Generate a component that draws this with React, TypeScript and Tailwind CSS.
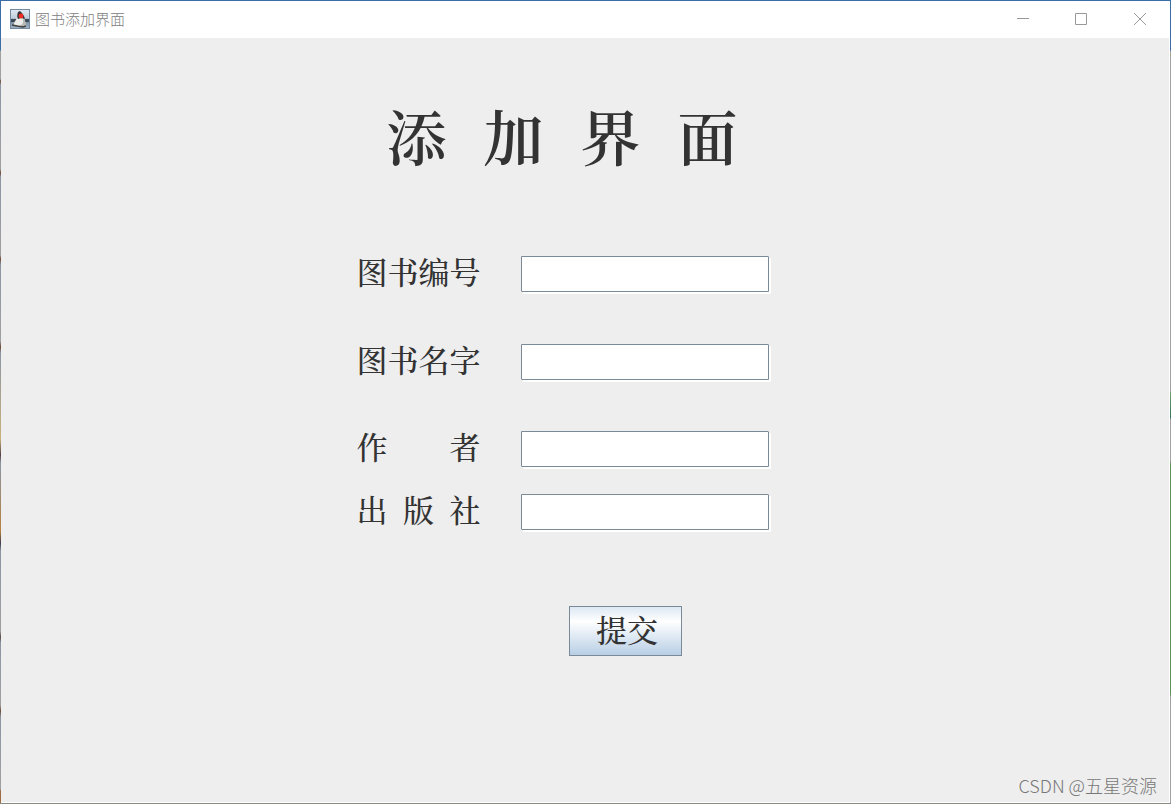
import { useState } from "react";

interface Field {
  id: string;
  label: string;
  spacing: string;
}

const FIELDS: Field[] = [
  { id: "bookId", label: "图书编号", spacing: "mb-[52px]" },
  { id: "bookName", label: "图书名字", spacing: "mb-[51px]" },
  { id: "author", label: "作\u3000\u3000者", spacing: "mb-[27px]" },
  { id: "publisher", label: "出\u2002版\u2002社", spacing: "mb-[76px]" },
];

function DukeIcon() {
  return (
    <svg className="w-5 h-5 shrink-0" viewBox="0 0 20 20" aria-hidden="true">
      <defs>
        <linearGradient id="tile" x1="0" y1="0" x2="0" y2="1">
          <stop offset="0" stopColor="#dfe8f1" />
          <stop offset="0.45" stopColor="#c0cfdd" />
          <stop offset="0.55" stopColor="#71859a" />
          <stop offset="1" stopColor="#a3b6c8" />
        </linearGradient>
      </defs>
      <rect x="0.5" y="0.5" width="19" height="19" fill="url(#tile)" stroke="#7389a0" />
      <path d="M1 10h5v3H1zM15 10h4v3h-4z" fill="#3d4a57" />
      <path d="M7 9L4 14l0 2 3 0 1 2 5 0 2-2-1-7z" fill="#ecece9" />
      <path d="M13 8l3 6 0 3-3 1-3-1 3-3z" fill="#b9bab6" />
      <path d="M2 16l5 1 6 1 3-1" fill="none" stroke="#3f403d" strokeWidth="1.5" />
      <path d="M8 3l2-1c2 2 4 4 5 8l-4-1-3 1c-1-2-1-4 0-7z" fill="#3a3338" />
      <circle cx="11" cy="7" r="2.4" fill="#f02d25" />
    </svg>
  );
}

function TitleBar() {
  return (
    <header className="flex items-center h-[37px] bg-white pl-[9px] pb-px">
      <DukeIcon />
      <span className="ml-[5px] text-[15px] leading-5 font-light text-[#808080]">图书添加界面</span>
      <div className="ml-auto flex h-full text-[#999999]">
        <button type="button" aria-label="最小化" className="w-[58px] grid place-items-center">
          <svg className="w-3 h-3" viewBox="0 0 12 12" stroke="currentColor" fill="none">
            <path d="M0 5.5h12" />
          </svg>
        </button>
        <button type="button" aria-label="最大化" className="w-[58px] grid place-items-center">
          <svg className="w-3 h-3" viewBox="0 0 12 12" stroke="currentColor" fill="none">
            <path d="M0.5 0.5h11v11h-11z" />
          </svg>
        </button>
        <button type="button" aria-label="关闭" className="w-[60px] grid place-items-center">
          <svg className="w-3 h-3" viewBox="0 0 12 12" stroke="currentColor" fill="none">
            <path d="M0 0l12 12M12 0L0 12" />
          </svg>
        </button>
      </div>
    </header>
  );
}

export default function App() {
  const [values, setValues] = useState<Record<string, string>>({});

  return (
    <div className="min-h-screen flex border-t border-t-[#3a6ea5] border-b border-b-[#8a8a84] font-['Noto_Sans_CJK_SC',sans-serif]">
      {/* Window edges */}
      <div className="w-px bg-[linear-gradient(#3a6ea5_49px,#a0a0a0_50px,#a0a0a0_78px,#6b4a35_80px,#8b95a3_84px,#a0a0a0_168px,#6b4a35_172px,#8b95a3_176px,#a0a0a0_254px,#6b4a35_258px,#8b95a3_264px,#a0a0a0_340px,#6b4a35_346px,#8b95a3_352px,#c9b27a_438px,#553f45_454px,#8b95a3_462px,#b5813f_530px,#3f3b4b_542px,#8b95a3_550px,#a0a0a0_630px,#5b4a45_636px,#8b95a3_642px,#a0a0a0_704px,#6b4a35_710px,#8b95a3_716px,#a0a0a0_788px,#9c6b43_790px)]" />

      <div className="flex-1 flex flex-col bg-[#eeeeee]">
        <TitleBar />

        <main className="flex-1 flex flex-col items-center pt-[57px] pr-[46px] border-r border-b border-white text-[#333333] font-['Noto_Serif_CJK_SC','Noto_Sans_CJK_SC',serif]">
          <h1 className="flex gap-[37px] text-[60px] leading-[80px] font-semibold">
            {["添", "加", "界", "面"].map((char) => (
              <span key={char}>{char}</span>
            ))}
          </h1>

          <form className="mt-[81px] flex flex-col" onSubmit={(e) => e.preventDefault()}>
            {FIELDS.map((field) => (
              <div key={field.id} className={`flex items-start gap-[37px] ${field.spacing}`}>
                <label
                  htmlFor={field.id}
                  className="w-32 pl-px text-[31px] leading-[30px] font-medium whitespace-pre"
                >
                  {field.label}
                </label>
                <input
                  id={field.id}
                  type="text"
                  value={values[field.id] ?? ""}
                  onChange={(e) => setValues({ ...values, [field.id]: e.target.value })}
                  className="w-[248px] h-9 px-1 bg-white border border-[#7a8a99] rounded-tr-[1px] rounded-bl-[1px] shadow-[2px_2px_0_#ffffff] text-2xl outline-none"
                />
              </div>
            ))}
            <button
              type="submit"
              className="ml-[213px] w-[113px] h-[50px] pb-1 pl-1 border border-[#7a8a99] bg-linear-to-b from-[#dde8f3] via-white via-30% to-[#b8cfe5] text-[31px] leading-9 font-medium"
            >
              提交
            </button>
          </form>
        </main>

        <footer className="-mt-9 h-9 pr-[13px] text-right text-[18px] leading-9 font-light text-[#777777]">
          CSDN @五星资源
        </footer>
      </div>

      <div className="w-px bg-[linear-gradient(#3a6ea5_49px,#a0a0a0_50px,#a0a0a0_390px,#6f9a6a_392px,#2f7a5a_416px,#a0a0a0_419px,#a0a0a0_460px,#5f8f5a_463px,#5f8f5a_692px,#a0a0a0_696px)]" />
    </div>
  );
}
